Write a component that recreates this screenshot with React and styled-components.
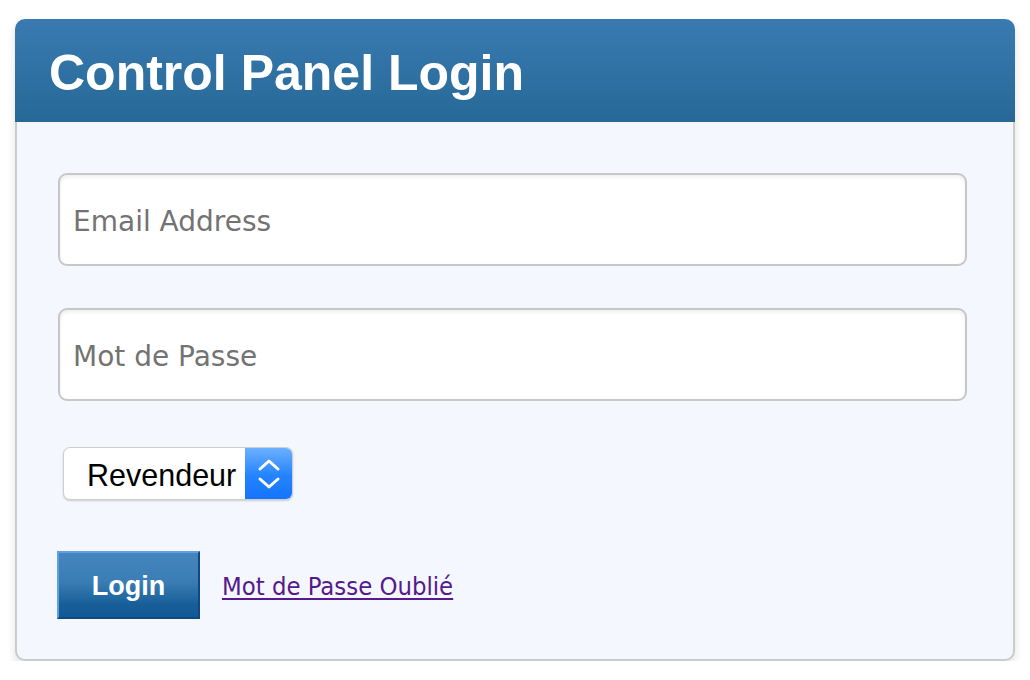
import React from "react";
import styled, { createGlobalStyle } from "styled-components";

const Global = createGlobalStyle`
  html, body { margin: 0; padding: 0; background: #ffffff; }
  body { font-family: "Liberation Sans", Arial, sans-serif; }
  * { box-sizing: border-box; }
`;

const Page = styled.div`
  padding: 19px 15px 0 15px;
  width: 1030px;
`;

const Card = styled.div`
  width: 1000px;
  border-radius: 10px;
  box-shadow: 0 4px 8px rgba(0, 0, 0, 0.12);
  background: #f4f7fe;
`;

const Header = styled.div`
  height: 103px;
  display: flex;
  align-items: center;
  padding-left: 34px;
  border-radius: 10px 10px 0 0;
  background: linear-gradient(to bottom, #397bb1 0%, #266896 100%);
`;

const Title = styled.h1`
  margin: 0;
  font-family: "Liberation Sans", Arial, sans-serif;
  font-weight: bold;
  font-size: 50px;
  line-height: 1;
  color: #ffffff;
  padding-top: 4px;
`;

const Body = styled.div`
  border: 2px solid #cbcbcb;
  border-top: none;
  border-radius: 0 0 10px 10px;
  padding: 51px 46px 40px 41px;
  display: flex;
  flex-direction: column;
`;

const Input = styled.input`
  width: 909px;
  height: 93px;
  border: 2px solid #c7c7c7;
  border-radius: 9px;
  background: #ffffff;
  box-shadow: inset 0 2px 4px rgba(0, 0, 0, 0.07);
  padding: 3px 0 0 13px;
  font-family: "DejaVu Sans", Verdana, sans-serif;
  font-size: 28px;
  color: #333;
  margin-bottom: ${(p) => p.$gap}px;
  outline: none;
  &::placeholder { color: #737373; }
`;

const Select = styled.div`
  margin-left: 5px;
  width: 230px;
  height: 53px;
  display: flex;
  border: 1px solid #cfcfcf;
  border-radius: 7px;
  background: #ffffff;
  box-shadow: 0 1px 2px rgba(0, 0, 0, 0.18);
  overflow: hidden;
  margin-bottom: 51px;
`;

const SelectText = styled.span`
  flex: 1;
  display: flex;
  align-items: center;
  padding: 3px 0 0 23px;
  font-family: "Liberation Sans", Arial, sans-serif;
  font-size: 30.5px;
  color: #000;
`;

const Stepper = styled.span`
  width: 47px;
  display: flex;
  align-items: center;
  justify-content: center;
  background: linear-gradient(to bottom, #6bb0ff 0%, #2383ff 55%, #1474fb 100%);
`;

const Actions = styled.div`
  display: flex;
  align-items: center;
  gap: 22px;
`;

const Button = styled.button`
  width: 143px;
  height: 68px;
  margin-left: -1px;
  border-style: solid;
  border-width: 2px;
  border-color: #5e9fe8 #0c4a80 #0c4a80 #5e9fe8;
  background: linear-gradient(to bottom, #4585bd 0%, #3a7db4 45%, #185f99 80%, #125893 100%);
  color: #ffffff;
  font-family: "Liberation Sans", Arial, sans-serif;
  font-weight: bold;
  font-size: 27px;
  padding: 2px 0 0 0;
  cursor: pointer;
`;

const Link = styled.a`
  font-family: "DejaVu Sans Condensed", "DejaVu Sans", Tahoma, sans-serif;
  font-size: 25.4px;
  color: #551a8b;
  text-decoration: underline;
  text-underline-offset: 3px;
  text-decoration-thickness: 2px;
  padding-top: 2px;
`;

function Chevrons() {
  return (
    <svg width="24" height="34" viewBox="0 0 24 34" fill="none">
      <path d="M3 12 L12 4 L21 12" stroke="#fff" strokeWidth="3" strokeLinecap="round" strokeLinejoin="round" />
      <path d="M3 22 L12 30 L21 22" stroke="#fff" strokeWidth="3" strokeLinecap="round" strokeLinejoin="round" />
    </svg>
  );
}

export default function App() {
  return (
    <>
      <Global />
      <Page>
        <Card>
          <Header>
            <Title>Control Panel Login</Title>
          </Header>
          <Body>
            <Input type="text" placeholder="Email Address" $gap={42} />
            <Input type="password" placeholder="Mot de Passe" $gap={46} />
            <Select>
              <SelectText>Revendeur</SelectText>
              <Stepper>
                <Chevrons />
              </Stepper>
            </Select>
            <Actions>
              <Button type="button">Login</Button>
              <Link href="#">Mot de Passe Oublié</Link>
            </Actions>
          </Body>
        </Card>
      </Page>
    </>
  );
}
